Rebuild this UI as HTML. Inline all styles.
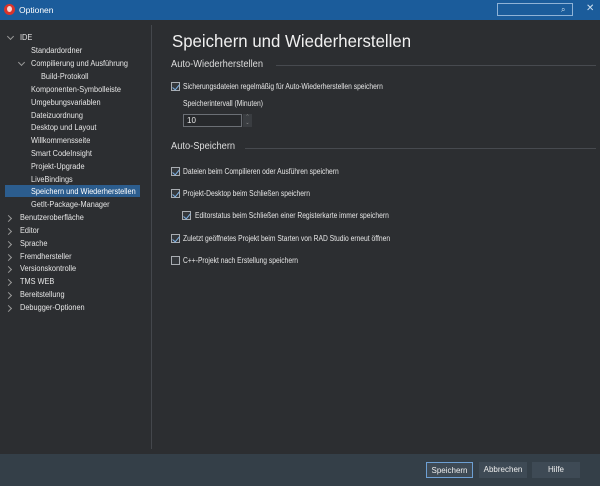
<!DOCTYPE html>
<html><head><meta charset="utf-8"><style>
*{margin:0;padding:0;box-sizing:border-box}
body{width:600px;height:486px;background:#2c2e31;font-family:"Liberation Sans",sans-serif;color:#e6e6e6;font-size:8px;position:relative;overflow:hidden}
.a{position:absolute;white-space:nowrap}
.t{transform:scaleX(0.92);transform-origin:0 0}
.s{transform:scaleX(0.84);transform-origin:0 0}
.tb{left:0;top:0;width:600px;height:20px;background:#1b5c9b}
.cb{width:9px;height:9px;border:1px solid #a9adb2;background:#34373b}
.cb.c::after{content:"";position:absolute;left:2px;top:0px;width:3px;height:6px;border:solid #7fb3e6;border-width:0 1.3px 1.3px 0;transform:rotate(40deg)}
.chev{width:5px;height:5px;border:solid #999;border-width:0 1px 1px 0}
.btn{height:16px;background:#3e4a55;text-align:center;line-height:16px;color:#eee;font-size:8px}
.hr{height:1px;background:#474a4f}
</style></head><body>
<div class="a tb"></div>
<div class="a" style="left:4px;top:4px;width:11px;height:11px;border-radius:50%;background:#d9342b"></div>
<div class="a" style="left:7px;top:6px;width:5px;height:6px;border-radius:50%;background:#fff;opacity:.8"></div>
<div class="a" style="left:19px;top:5px;font-size:8.5px;color:#fff">Optionen</div>
<div class="a" style="left:497px;top:3px;width:76px;height:13px;border:1px solid #8fb2d6"></div>
<div class="a" style="left:561px;top:5px;font-size:8px;color:#cfe0f0">⌕</div>
<div class="a" style="left:586px;top:3px;font-size:10px;color:#cfe0f0">✕</div>

<div class="a" style="left:151px;top:25px;width:1px;height:424px;background:#44474c"></div>
<div class="a" style="left:0;top:454px;width:600px;height:32px;background:#343f48"></div>

<div class="a" style="left:5px;top:185px;width:135px;height:12px;background:#2c5d8e"></div>

<div class="a chev" style="left:8px;top:34px;transform:rotate(45deg)"></div>
<div class="a chev" style="left:19px;top:60px;transform:rotate(45deg)"></div>
<div class="a t" style="left:20px;top:33px">IDE</div>
<div class="a t" style="left:31px;top:46px">Standardordner</div>
<div class="a t" style="left:31px;top:59px">Compilierung und Ausführung</div>
<div class="a t" style="left:41px;top:72px">Build-Protokoll</div>
<div class="a t" style="left:31px;top:85px">Komponenten-Symbolleiste</div>
<div class="a t" style="left:31px;top:98px">Umgebungsvariablen</div>
<div class="a t" style="left:31px;top:111px">Dateizuordnung</div>
<div class="a t" style="left:31px;top:123px">Desktop und Layout</div>
<div class="a t" style="left:31px;top:136px">Willkommensseite</div>
<div class="a t" style="left:31px;top:149px">Smart CodeInsight</div>
<div class="a t" style="left:31px;top:162px">Projekt-Upgrade</div>
<div class="a t" style="left:31px;top:175px">LiveBindings</div>
<div class="a t" style="left:31px;top:187px;color:#fff">Speichern und Wiederherstellen</div>
<div class="a t" style="left:31px;top:200px">GetIt-Package-Manager</div>
<div style="position:absolute;left:0;top:213px">
<div class="a t" style="left:20px;top:0">Benutzeroberfläche</div>
<div class="a t" style="left:20px;top:13px">Editor</div>
<div class="a t" style="left:20px;top:26px">Sprache</div>
<div class="a t" style="left:20px;top:39px">Fremdhersteller</div>
<div class="a t" style="left:20px;top:51px">Versionskontrolle</div>
<div class="a t" style="left:20px;top:64px">TMS WEB</div>
<div class="a t" style="left:20px;top:77px">Bereitstellung</div>
<div class="a t" style="left:20px;top:90px">Debugger-Optionen</div>
<div class="a chev" style="left:6px;top:3px;transform:rotate(-45deg)"></div>
<div class="a chev" style="left:6px;top:16px;transform:rotate(-45deg)"></div>
<div class="a chev" style="left:6px;top:29px;transform:rotate(-45deg)"></div>
<div class="a chev" style="left:6px;top:42px;transform:rotate(-45deg)"></div>
<div class="a chev" style="left:6px;top:54px;transform:rotate(-45deg)"></div>
<div class="a chev" style="left:6px;top:67px;transform:rotate(-45deg)"></div>
<div class="a chev" style="left:6px;top:80px;transform:rotate(-45deg)"></div>
<div class="a chev" style="left:6px;top:93px;transform:rotate(-45deg)"></div>
</div>

<div class="a" style="left:172px;top:31px;font-size:17.5px;color:#f0f0f0;transform:scaleX(0.96);transform-origin:0 0">Speichern und Wiederherstellen</div>
<div class="a" style="left:171px;top:59px;font-size:10px;color:#ddd;transform:scaleX(0.93);transform-origin:0 0">Auto-Wiederherstellen</div>
<div class="a hr" style="left:276px;top:65px;width:320px"></div>
<div class="a cb c" style="left:171px;top:82px"></div>
<div class="a s" style="left:183px;top:82px">Sicherungsdateien regelmäßig für Auto-Wiederherstellen speichern</div>
<div class="a s" style="left:183px;top:99px">Speicherintervall (Minuten)</div>
<div class="a" style="left:183px;top:114px;width:59px;height:13px;border:1px solid #6b6f75;background:#27292c;padding:1px 3px;font-size:8px">10</div>
<div class="a" style="left:243px;top:114px;width:9px;height:13px;background:#3a3d41;font-size:5px;color:#999;text-align:center;line-height:6px">⌃<br>⌄</div>
<div class="a" style="left:171px;top:141px;font-size:10px;color:#ddd;transform:scaleX(0.93);transform-origin:0 0">Auto-Speichern</div>
<div class="a hr" style="left:245px;top:148px;width:351px"></div>
<div class="a cb c" style="left:171px;top:167px"></div>
<div class="a s" style="left:183px;top:167px">Dateien beim Compilieren oder Ausführen speichern</div>
<div class="a cb c" style="left:171px;top:189px"></div>
<div class="a s" style="left:183px;top:189px">Projekt-Desktop beim Schließen speichern</div>
<div class="a cb c" style="left:182px;top:211px"></div>
<div class="a s" style="left:195px;top:211px">Editorstatus beim Schließen einer Registerkarte immer speichern</div>
<div class="a cb c" style="left:171px;top:234px"></div>
<div class="a s" style="left:183px;top:234px">Zuletzt geöffnetes Projekt beim Starten von RAD Studio erneut öffnen</div>
<div class="a cb" style="left:171px;top:256px"></div>
<div class="a s" style="left:183px;top:256px">C++-Projekt nach Erstellung speichern</div>

<div class="a btn" style="left:426px;top:462px;width:47px;border:1px solid #6d9fd3">Speichern</div>
<div class="a btn" style="left:479px;top:462px;width:48px">Abbrechen</div>
<div class="a btn" style="left:532px;top:462px;width:48px">Hilfe</div>
</body></html>
